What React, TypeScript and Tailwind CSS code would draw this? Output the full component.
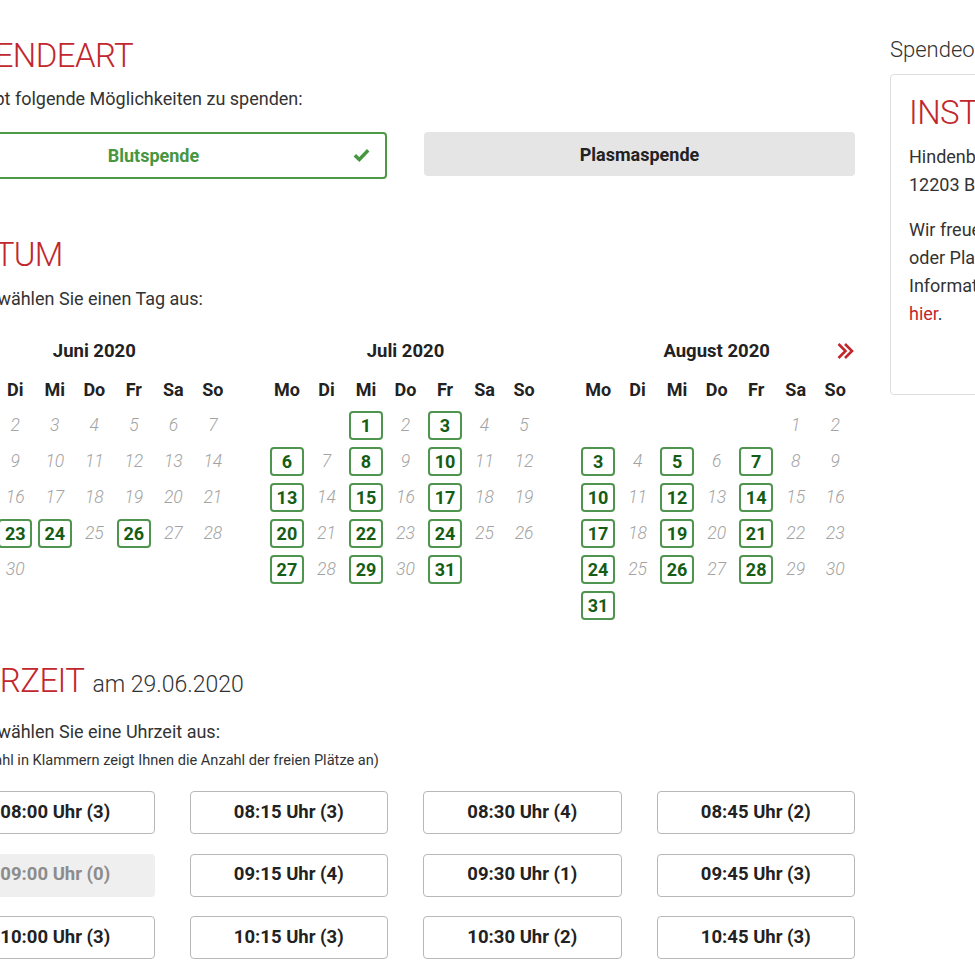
import React from "react";

type Month = {
  title: string;
  first: number;
  days: number;
  avail: number[];
  next?: boolean;
};

const months: Month[] = [
  { title: "Juni 2020", first: 0, days: 30, avail: [22, 23, 24, 26, 29] },
  {
    title: "Juli 2020",
    first: 2,
    days: 31,
    avail: [1, 3, 6, 8, 10, 13, 15, 17, 20, 22, 24, 27, 29, 31],
  },
  {
    title: "August 2020",
    first: 5,
    days: 31,
    avail: [3, 5, 7, 10, 12, 14, 17, 19, 21, 24, 26, 28, 31],
    next: true,
  },
];

const weekdays = ["Mo", "Di", "Mi", "Do", "Fr", "Sa", "So"];

const slots: { label: string; disabled?: boolean }[] = [
  { label: "08:00 Uhr (3)" },
  { label: "08:15 Uhr (3)" },
  { label: "08:30 Uhr (4)" },
  { label: "08:45 Uhr (2)" },
  { label: "09:00 Uhr (0)", disabled: true },
  { label: "09:15 Uhr (4)" },
  { label: "09:30 Uhr (1)" },
  { label: "09:45 Uhr (3)" },
  { label: "10:00 Uhr (3)" },
  { label: "10:15 Uhr (3)" },
  { label: "10:30 Uhr (2)" },
  { label: "10:45 Uhr (3)" },
];

function MonthView({ m }: { m: Month }) {
  const cells: (number | null)[] = [];
  for (let i = 0; i < m.first; i++) cells.push(null);
  for (let d = 1; d <= m.days; d++) cells.push(d);
  return (
    <div>
      <div className="flex h-[24px] items-center">
        <div className="w-[20px]" />
        <div className="flex-1 text-center text-[18.5px] leading-[24px] font-bold text-[#222]">
          {m.title}
        </div>
        <div className="flex w-[20px] justify-end">
          {m.next && (
            <svg width="18" height="18" viewBox="0 0 18 18" fill="none" className="mr-[1px]">
              <path d="M2.5 2 L9.5 9 L2.5 16" stroke="#c1272d" strokeWidth="2.6" />
              <path d="M9 2 L16 9 L9 16" stroke="#c1272d" strokeWidth="2.6" />
            </svg>
          )}
        </div>
      </div>
      <div className="mt-[8px] grid grid-cols-7">
        {weekdays.map((w) => (
          <div
            key={w}
            className="flex h-[36px] items-center justify-center text-[18px] font-bold text-[#222]"
          >
            {w}
          </div>
        ))}
        {cells.map((d, i) => (
          <div key={i} className="flex h-[36px] items-center justify-center">
            {d === null ? null : m.avail.includes(d) ? (
              <div className="flex h-[29px] w-[34px] items-center justify-center rounded-[4px] border-2 border-[#4f944f] text-[18px] font-bold text-[#155d15]">
                {d}
              </div>
            ) : (
              <span className="text-[17.5px] font-light italic text-[#a3a3a3]">{d}</span>
            )}
          </div>
        ))}
      </div>
    </div>
  );
}

export default function App() {
  return (
    <div className="h-[975px] w-[975px] overflow-hidden bg-white font-['Roboto',_sans-serif] text-[#333]">
      <div className="ml-[-44px] flex gap-[35px] pt-[36px]">
        <main className="w-[899px] shrink-0">
          <h2 className="text-[33px] leading-[40px] tracking-[-0.6px] font-light text-[#c1272d]">
            SPENDEART
          </h2>
          <p className="mt-[10px] text-[18px] leading-[26px] text-[#333]">
            Es gibt folgende Möglichkeiten zu spenden:
          </p>
          <div className="mt-[20px] grid grid-cols-2 items-start gap-[37px]">
            <div className="relative flex h-[47px] items-center justify-center rounded-[4px] border-2 border-[#4c9a45] pr-[36px] text-[18px] font-bold text-[#479640]">
              Blutspende
              <svg
                width="17"
                height="14"
                viewBox="0 0 17 14"
                fill="none"
                className="absolute right-[15px] top-[14px]"
              >
                <path d="M1.8 7.2 L6.3 11.5 L15.2 2.3" stroke="#479640" strokeWidth="3.4" />
              </svg>
            </div>
            <div className="flex h-[44px] items-center justify-center rounded-[4px] bg-[#e5e5e5] text-[18px] font-bold text-[#222]">
              Plasmaspende
            </div>
          </div>

          <h2 className="mt-[56px] text-[33px] leading-[40px] tracking-[-0.6px] font-light text-[#c1272d]">
            DATUM
          </h2>
          <p className="mt-[11px] text-[18px] leading-[26px] text-[#333]">
            Bitte wählen Sie einen Tag aus:
          </p>
          <div className="mt-[27px] grid grid-cols-3 items-start gap-[34.5px]">
            {months.map((m) => (
              <MonthView key={m.title} m={m} />
            ))}
          </div>

          <h2 className="mt-[38px] flex h-[40px] items-baseline text-[#c1272d]">
            <span className="text-[33px] leading-[40px] tracking-[-0.6px] font-light">UHRZEIT</span>
            <span className="ml-[8px] text-[23px] leading-[40px] font-light text-[#333]">
              am 29.06.2020
            </span>
          </h2>
          <p className="mt-[18px] text-[18px] leading-[26px] text-[#333]">
            Bitte wählen Sie eine Uhrzeit aus:
          </p>
          <p className="mt-[5px] text-[14.6px] leading-[20px] text-[#333]">
            (Die Zahl in Klammern zeigt Ihnen die Anzahl der freien Plätze an)
          </p>
          <div className="mt-[21px] grid grid-cols-4 gap-x-[35px] gap-y-[19.5px]">
            {slots.map((s) =>
              s.disabled ? (
                <div
                  key={s.label}
                  className="flex h-[43px] items-center justify-center rounded-[4px] bg-[#efefef] text-[18.5px] font-bold text-[#8c8c8c]"
                >
                  {s.label}
                </div>
              ) : (
                <div
                  key={s.label}
                  className="flex h-[43px] items-center justify-center rounded-[4px] border border-[#b8b8b8] bg-white text-[18.5px] font-bold text-[#222]"
                >
                  {s.label}
                </div>
              )
            )}
          </div>
        </main>

        <aside className="w-[330px] shrink-0">
          <div className="text-[22px] leading-[28px] font-light text-[#333]">Spendeort</div>
          <div className="mt-[10px] h-[321px] rounded-[4px] border border-[#dedede] px-[18px] pt-[18px]">
            <h3 className="whitespace-nowrap text-[33px] leading-[40px] tracking-[-0.6px] font-light text-[#c1272d]">
              INSTITUT FÜR TRANSFUSIONSMEDIZIN
            </h3>
            <div className="mt-[10px] whitespace-nowrap text-[18px] leading-[28px] text-[#333]">
              <div>Hindenburgdamm 30</div>
              <div>12203 Berlin</div>
            </div>
            <div className="mt-[17px] whitespace-nowrap text-[18px] leading-[28px] text-[#333]">
              <div>Wir freuen uns über Ihre Blut-</div>
              <div>oder Plasmaspende. Weitere</div>
              <div>Informationen finden Sie</div>
              <div>
                <span className="text-[#c1272d]">hier</span>.
              </div>
            </div>
          </div>
        </aside>
      </div>
    </div>
  );
}
